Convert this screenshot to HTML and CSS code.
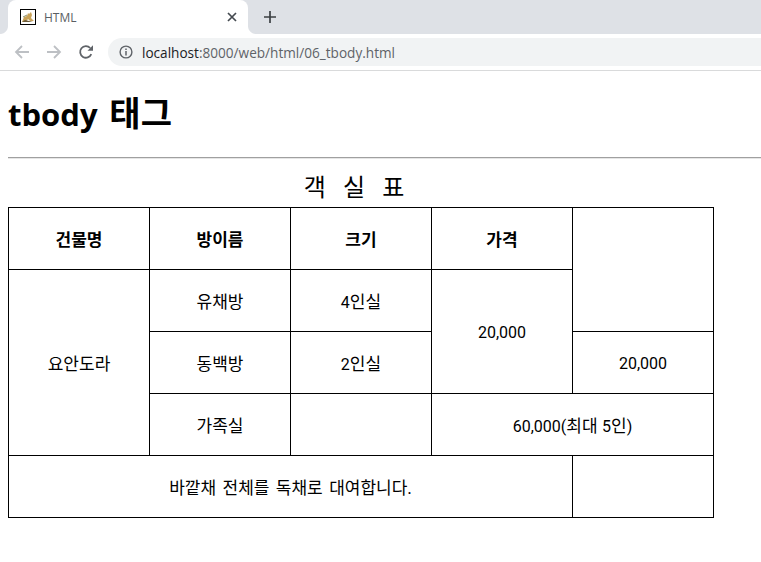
FILE: index.html
```html
<!DOCTYPE html>
<html lang="ko">
<head>
<meta charset="utf-8">
<title>HTML</title>
<link rel="stylesheet" href="styles.css">
</head>
<body>
<header class="chrome">
  <div class="tabstrip">
    <div class="tab">
      <svg class="favicon" width="16" height="16" viewBox="0 0 16 16">
        <rect x="0.5" y="0.5" width="15" height="15" fill="#fff" stroke="#000"/>
        <path d="M2 13 L4 8 L7 7 L8 4 L9 5 L11 3 L12 6 L11 9 L14 12 L10 12 L8 10 L6 13 Z" fill="#c9a35a"/>
        <path d="M2 13 L5 11 L9 12 L13 13 Z" fill="#6b5a3a"/>
        <path d="M3 8 L7 6" stroke="#8a8f6a" stroke-width="1"/>
      </svg>
      <span class="tab-title">HTML</span>
      <svg class="tab-close" width="10" height="10" viewBox="0 0 10 10"><path d="M1 1 L9 9 M9 1 L1 9" stroke="#444a50" stroke-width="1.7"/></svg>
    </div>
    <svg class="new-tab" width="12" height="12" viewBox="0 0 12 12"><path d="M6 0 V12 M0 6 H12" stroke="#3c4043" stroke-width="1.7"/></svg>
  </div>
  <div class="toolbar">
    <svg class="nav" width="16" height="16" viewBox="0 0 16 16"><path d="M15 8 H2 M8 2 L2 8 L8 14" fill="none" stroke="#bdc0c4" stroke-width="1.8"/></svg>
    <svg class="nav" width="16" height="16" viewBox="0 0 16 16"><path d="M1 8 H14 M8 2 L14 8 L8 14" fill="none" stroke="#bdc0c4" stroke-width="1.8"/></svg>
    <svg class="nav" width="16" height="16" viewBox="0 0 16 16"><path d="M13.3 10.2 A5.8 5.8 0 1 1 12.2 4" fill="none" stroke="#5f6368" stroke-width="1.8"/><path d="M9.5 6.8 H15 V1.3 Z" fill="#5f6368"/></svg>
    <div class="omnibox">
      <svg width="14" height="14" viewBox="0 0 14 14"><circle cx="7" cy="7" r="5.9" fill="none" stroke="#5f6368" stroke-width="1.4"/><path d="M7 6 V10.4 M7 3.6 V5" stroke="#5f6368" stroke-width="1.5"/></svg>
      <span class="url"><span class="host">localhost</span>:8000/web/html/06_tbody.html</span>
    </div>
  </div>
</header>
<main class="page">
  <h1><span class="latin-title">tbody</span> 태그</h1>
  <hr>
  <table>
    <caption>객 실 표</caption>
    <tr><th>건물명</th><th>방이름</th><th>크기</th><th>가격</th><td rowspan="2"></td></tr>
    <tr><td rowspan="3">요안도라</td><td>유채방</td><td><span class="num">4</span>인실</td><td rowspan="2"><span class="num">20,000</span></td></tr>
    <tr><td>동백방</td><td><span class="num">2</span>인실</td><td><span class="num">20,000</span></td></tr>
    <tr><td>가족실</td><td></td><td colspan="2"><span class="num">60,000(</span>최대 <span class="num">5</span>인<span class="num">)</span></td></tr>
    <tr><td colspan="4" class="wide">바깥채 전체를 독채로 대여합니다.</td><td></td></tr>
  </table>
</main>
</body>
</html>
```
FILE: styles.css
```css
html, body {
  margin: 0;
  padding: 0;
  background: #fff;
  overflow: hidden;
}
body {
  font-family: "Open Sans", "Noto Sans CJK KR", sans-serif;
  color: #000;
}
.chrome {
  height: 71px;
  border-bottom: 1px solid #d9dadb;
  box-sizing: border-box;
}
.tabstrip {
  height: 34px;
  background: #dee1e6;
  display: flex;
  align-items: flex-end;
  padding-left: 8px;
}
.tab {
  position: relative;
  width: 240px;
  height: 34px;
  box-sizing: border-box;
  background: #fff;
  border-radius: 8px 8px 0 0;
  display: flex;
  align-items: center;
  padding: 0 11px 0 12px;
  gap: 8px;
}
.tab::before,
.tab::after {
  content: "";
  position: absolute;
  bottom: 0;
  width: 8px;
  height: 8px;
  background: radial-gradient(circle at 0 0, #dee1e6 7.5px, #fff 8.5px);
}
.tab::before {
  left: -8px;
}
.tab::after {
  right: -8px;
  transform: scaleX(-1);
}
.favicon { flex: none; }
.tab-title {
  flex: 1;
  font-size: 12px;
  color: #5a5e63;
  font-family: "Open Sans", sans-serif;
}
.new-tab {
  align-self: center;
  margin-left: 16px;
}
.toolbar {
  height: 36px;
  display: flex;
  align-items: center;
  padding: 0 0 0 14px;
  gap: 16px;
  background: #fff;
}
.omnibox {
  flex: 1;
  height: 28px;
  margin-left: -2px;
  background: #f1f3f4;
  border-radius: 14px 0 0 14px;
  display: flex;
  align-items: center;
  padding-left: 11px;
  gap: 9px;
}
.url {
  font-size: 13.6px;
  color: #5f6368;
}
.host { color: #202124; }
.page {
  padding: 0 0 0 8px;
}
h1 {
  font-size: 34px;
  font-weight: 700;
  line-height: 44px;
  margin: 20px 0 21px;
  word-spacing: 3px;
}
.latin-title {
  font-size: 31px;
}
hr {
  margin: 0 0 7px;
  border: 0;
  border-top: 1px solid #a0a0a0;
  border-bottom: 1px solid #e6e6e6;
  height: 0;
}
table {
  border-collapse: collapse;
  table-layout: fixed;
  width: 706px;
}
caption {
  font-size: 24px;
  line-height: 41px;
  word-spacing: 11px;
  padding-right: 14px;
}
th, td {
  border: 1px solid #000;
  height: 61px;
  padding: 0;
  width: 140px;
  text-align: center;
  vertical-align: middle;
  font-size: 17px;
}
th { font-weight: 700; }
.num {
  font-family: Roboto, sans-serif;
  font-size: 16px;
}
.wide { word-spacing: 2px; }
```
